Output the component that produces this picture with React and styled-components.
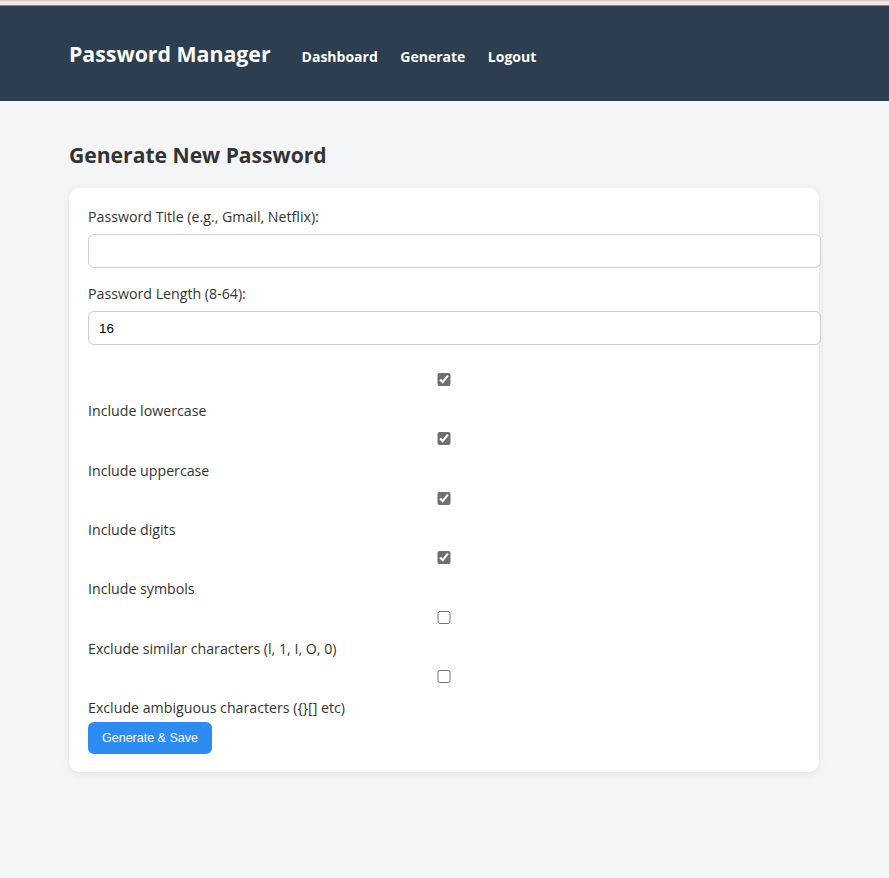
import React, { useState } from "react";
import styled, { createGlobalStyle } from "styled-components";

const GlobalStyle = createGlobalStyle`
  html, body {
    margin: 0;
    padding: 0;
    background: #f4f5f7;
  }
  body {
    font-family: "Open Sans", "Noto Sans", sans-serif;
    color: #333333;
  }
`;

const TopStrip = styled.div`
  height: 4px;
  background: #f1e4e4;
  border-top: 1px solid #d8c6c8;
  border-bottom: 1px solid #8d8890;
`;

const Header = styled.header`
  background-color: #2c3e50;
  height: 95px;
  box-sizing: border-box;
  padding-top: 34px;
`;

const Container = styled.div`
  width: 750px;
  margin-left: max(0px, calc(50% - 375.5px));
`;

const HeaderInner = styled(Container)`
  display: flex;
  align-items: flex-start;
  gap: 31px;
`;

const Brand = styled.div`
  color: #ffffff;
  font-size: 21.3px;
  line-height: 28px;
  font-weight: 700;
`;

const Nav = styled.nav`
  display: flex;
  gap: 22.5px;
  margin-top: 6.5px;
`;

const NavLink = styled.a`
  color: #ffffff;
  font-size: 14px;
  line-height: 20px;
  font-weight: 700;
  text-decoration: none;
`;

const Main = styled(Container)`
  padding: 39px 0 100px;
`;

const Title = styled.h2`
  margin: 0 0 18px;
  font-size: 21.1px;
  font-weight: 700;
  color: #333333;
  line-height: 30px;
`;

const Card = styled.div`
  background: #ffffff;
  border-radius: 10px;
  box-shadow: 0 2px 8px rgba(0, 0, 0, 0.08);
  padding: 17px 19px 18.4px;
`;

const FieldLabel = styled.label`
  display: block;
  font-size: 14.2px;
  line-height: 20px;
  padding-top: 2px;
  margin-bottom: 7px;
`;

const TextInput = styled.input`
  display: block;
  box-sizing: content-box;
  width: calc(100% - 1px);
  height: 32px;
  padding: 0 10px;
  margin: 0 0 14px;
  border: 1px solid #cccccc;
  border-radius: 6px;
  font-family: "Liberation Sans", Arial, sans-serif;
  font-size: 13.33px;
  color: #000000;
  background: #ffffff;
  outline: none;
`;

const OptionList = styled.div`
  padding-top: 14px;
`;

const OptionLabel = styled.label`
  display: block;
  font-size: 14.2px;
  line-height: 20px;
  padding-bottom: 11.2px;
`;

const Check = styled.input`
  display: block;
  width: 100%;
  height: 13px;
  margin: 0 0 15.2px;
  accent-color: #6f6f6f;
`;

const Button = styled.button`
  display: block;
  margin-top: -7.2px;
  background: #2e8cf0;
  color: #ffffff;
  border: none;
  border-radius: 6px;
  height: 32px;
  padding: 0 14px;
  font-family: "Liberation Sans", Arial, sans-serif;
  font-size: 12.5px;
  cursor: pointer;
`;

const options = [
  { key: "lower", label: "Include lowercase", checked: true },
  { key: "upper", label: "Include uppercase", checked: true },
  { key: "digits", label: "Include digits", checked: true },
  { key: "symbols", label: "Include symbols", checked: true },
  { key: "similar", label: "Exclude similar characters (l, 1, I, O, 0)", checked: false },
  { key: "ambiguous", label: "Exclude ambiguous characters ({}[] etc)", checked: false },
];

export default function App() {
  const [state, setState] = useState(
    Object.fromEntries(options.map((o) => [o.key, o.checked]))
  );

  return (
    <>
      <GlobalStyle />
      <TopStrip />
      <Header>
        <HeaderInner>
          <Brand>Password Manager</Brand>
          <Nav>
            <NavLink href="#">Dashboard</NavLink>
            <NavLink href="#">Generate</NavLink>
            <NavLink href="#">Logout</NavLink>
          </Nav>
        </HeaderInner>
      </Header>
      <Main>
        <Title>Generate New Password</Title>
        <Card>
          <FieldLabel>Password Title (e.g., Gmail, Netflix):</FieldLabel>
          <TextInput type="text" />
          <FieldLabel>Password Length (8-64):</FieldLabel>
          <TextInput type="number" defaultValue="16" />
          <OptionList>
            {options.map((o) => (
              <OptionLabel key={o.key}>
                <Check
                  type="checkbox"
                  checked={state[o.key]}
                  onChange={() => setState({ ...state, [o.key]: !state[o.key] })}
                />
                {o.label}
              </OptionLabel>
            ))}
          </OptionList>
          <Button>Generate &amp; Save</Button>
        </Card>
      </Main>
    </>
  );
}
